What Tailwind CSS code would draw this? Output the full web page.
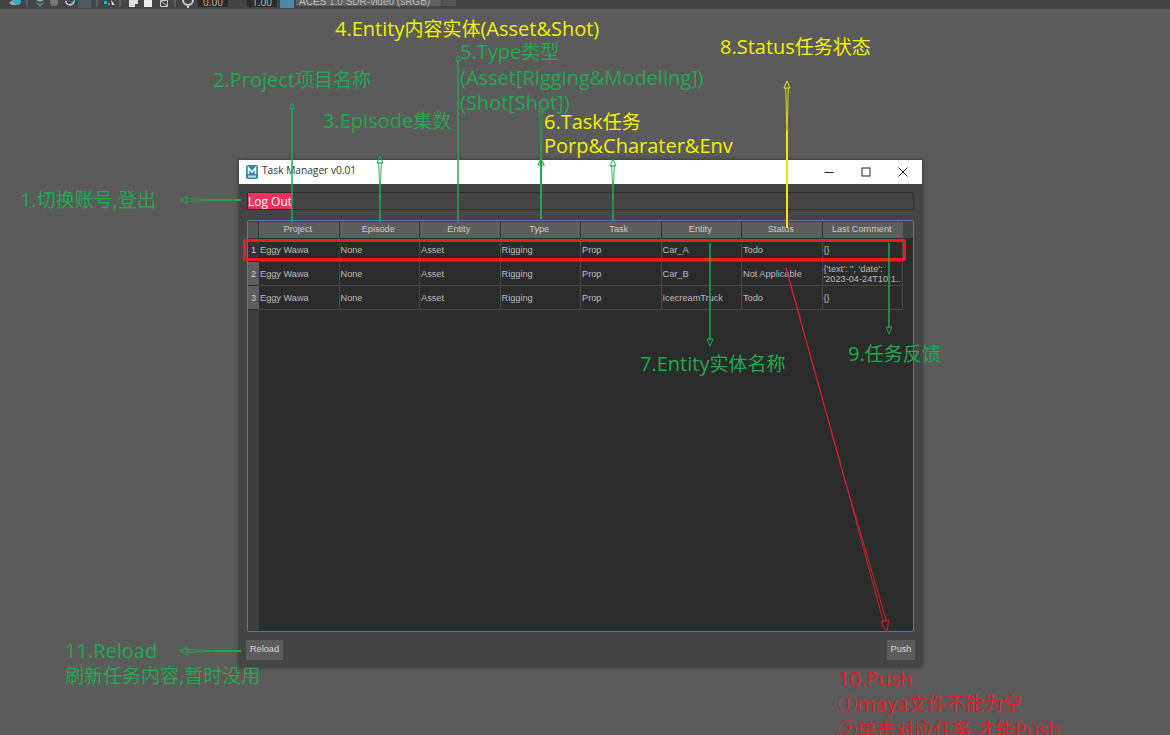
<!DOCTYPE html>
<html lang="en">
  <head>
    <meta charset="UTF-8" />
    <title>Task Manager v0.01</title>
    <script src="https://cdn.jsdelivr.net/npm/@tailwindcss/browser@4"></script>
  </head>
  <body class="bg-[#5b5b5b]">
    <div class="relative w-[1170px] h-[735px] overflow-hidden bg-[#5b5b5b] font-['Open_Sans','Noto_Sans_CJK_SC',sans-serif]">
      <!-- Maya toolbar, cut off by the screenshot -->
      <div class="h-[9px] bg-[#444444] overflow-hidden flex items-start text-[10px] text-[#bdbdbd]">
        <svg width="198" height="9" viewBox="0 0 198 9" class="shrink-0">
          <path d="M78 0h13v8h-13z" fill="#4a5a60" />
          <g fill="none" stroke="#777" stroke-width="1">
            <path d="M27 0v7M97 0v7M120 0v7M175 0v7" />
          </g>
          <path d="M9 3l4-3h4l-1 5h-4z" fill="#aaa" />
          <circle cx="17" cy="1" r="4" fill="#2fb1c4" />
          <path d="M35 2l5 2 5-2-5 5z" fill="#2f96a8" />
          <path d="M36 0h8l-4 2z" fill="#aaa" />
          <circle cx="54" cy="2" r="4" fill="#777" />
          <path d="M66 1a4 4 0 0 0 8 0" fill="none" stroke="#ddd" stroke-width="1.5" />
          <path d="M71 4l4-4" stroke="#2fb1c4" stroke-width="1.5" />
          <path d="M104 1h3v3h-3zM108 3h2v2h-2z" fill="#2fb1c4" />
          <path d="M111 0l4 5-3 0z" fill="#ddd" />
          <path d="M129 0h9v4h-3v3h-6z" fill="#ddd" />
          <path d="M144 0h8v7h-8z" fill="#eee" />
          <path d="M160.500 0.500h7v6h-7zM161 1l6 5" fill="none" stroke="#ccc" />
          <path d="M183 0a5 5 0 0 0 10 0M188 5v3" fill="none" stroke="#ccc" stroke-width="2" />
        </svg>
        <div class="w-[30px] h-[7px] bg-[#2b2b2b] text-center leading-[4px] shrink-0">0.00</div>
        <div class="w-[19px] shrink-0"></div>
        <div class="w-[30px] h-[7px] bg-[#2b2b2b] text-center leading-[4px] shrink-0">1.00</div>
        <div class="w-[3px] shrink-0"></div>
        <div class="w-[14px] h-[8px] bg-[#4d88a8] shrink-0"></div>
        <div class="w-[2px] shrink-0"></div>
        <div class="w-[145px] h-[6px] bg-[#606060] pl-[3px] leading-[3px] shrink-0 font-['Liberation_Sans']">ACES 1.0 SDR-video (sRGB)</div>
        <div class="w-[14px] h-[6px] ml-px bg-[#555555] shrink-0"></div>
      </div>

      <!-- Task Manager window -->
      <div class="absolute left-[239px] top-[160px] w-[683px] h-[507px] flex flex-col bg-[#444444] shadow-[0_0_4px_rgba(0,0,0,0.5)] font-['Liberation_Sans','Noto_Sans_CJK_SC',sans-serif]">
        <div class="h-[24px] bg-white flex items-center shrink-0 text-[#333333]">
          <svg width="12" height="14" viewBox="0 0 12 14" class="ml-[7px]">
            <rect width="12" height="14" rx="2" fill="#2f86a8" />
            <path d="M2.500 9V3l3.500 4 3.500-4v6" fill="none" stroke="#fff" stroke-width="1.6" />
            <rect x="2" y="10.500" width="8" height="2" fill="#bfe0ec" />
          </svg>
          <span class="ml-[4px] -mt-[2px] text-[10.2px] font-['Open_Sans']">Task Manager v0.01</span>
          <div class="ml-auto flex items-center">
            <svg width="10" height="10" viewBox="0 0 10 10" class="mr-[27px]"><path d="M0.500 5.500h9" stroke="#222" /></svg>
            <svg width="10" height="10" viewBox="0 0 10 10" class="mr-[27px]"><rect x="1" y="1" width="8" height="8" fill="none" stroke="#222" /></svg>
            <svg width="10" height="10" viewBox="0 0 10 10" class="mr-[14px]"><path d="M0.500 0.500l9 9M9.500 0.500l-9 9" stroke="#222" /></svg>
          </div>
        </div>

        <div class="flex-1 flex flex-col pl-[8px] pr-[8px] pt-[8px] min-h-0">
          <div class="h-[18px] shrink-0 bg-[#454545] border border-[#2f2f2f] rounded-[2px] flex">
            <div class="w-[44px] bg-[#ef2f62] text-white text-[12px] leading-[17px] font-['Open_Sans'] whitespace-nowrap overflow-hidden">Log Out</div>
          </div>

          <div class="mt-[10px] h-[412px] shrink-0 border border-[#4d7f9b] rounded-[2px] bg-[#2b2b2b] flex flex-col overflow-hidden text-[9.2px] text-[#bcbcbc]">
            <!-- header -->
            <div class="h-[17px] shrink-0 bg-[#444444] grid grid-cols-[11px_repeat(8,80.5px)] text-center text-[#cacaca]">
              <div class="bg-[#555555] border-r border-[#333] mt-px"></div>
              <div class="bg-[#5d5d5d] border-r border-[#333] mt-px pr-[2px] leading-[15px]">Project</div>
              <div class="bg-[#5d5d5d] border-r border-[#333] mt-px pr-[2px] leading-[15px]">Episode</div>
              <div class="bg-[#5d5d5d] border-r border-[#333] mt-px pr-[2px] leading-[15px]">Entity</div>
              <div class="bg-[#5d5d5d] border-r border-[#333] mt-px pr-[2px] leading-[15px]">Type</div>
              <div class="bg-[#5d5d5d] border-r border-[#333] mt-px pr-[4px] leading-[15px]">Task</div>
              <div class="bg-[#5d5d5d] border-r border-[#333] mt-px pr-[2px] leading-[15px]">Entity</div>
              <div class="bg-[#5d5d5d] border-r border-[#333] mt-px pr-[2px] leading-[15px]">Status</div>
              <div class="bg-[#5d5d5d] mt-px pr-[2px] leading-[15px]">Last Comment</div>
            </div>

            <div class="flex-1 flex min-h-0">
              <!-- row numbers -->
              <div class="w-[11px] shrink-0 bg-[#3d3d3d] text-center text-[#d0d0d0] flex flex-col">
                <div class="h-[24px] leading-[24px] bg-[#333333] border-b border-[#2b2b2b]">1</div>
                <div class="h-[24px] leading-[24px] bg-[#5d5d5d] border-b border-[#2b2b2b]">2</div>
                <div class="h-[24px] leading-[24px] bg-[#5d5d5d] border-b border-[#2b2b2b]">3</div>
              </div>
              <!-- rows -->
              <div class="flex flex-col">
                <div class="h-[24px] grid grid-cols-[repeat(8,80.5px)] border-b border-[#484848]">
                  <div class="border-r border-[#484848] border-dotted pl-px leading-[24px]">Eggy Wawa</div>
                  <div class="border-r border-[#484848] pl-px leading-[24px]">None</div>
                  <div class="border-r border-[#484848] pl-px leading-[24px]">Asset</div>
                  <div class="border-r border-[#484848] pl-px leading-[24px]">Rigging</div>
                  <div class="border-r border-[#484848] pl-px leading-[24px]">Prop</div>
                  <div class="border-r border-[#484848] pl-px leading-[24px]">Car_A</div>
                  <div class="border-r border-[#484848] pl-px leading-[24px]">Todo</div>
                  <div class="border-r border-[#484848] pl-px leading-[24px]">{}</div>
                </div>
                <div class="h-[24px] grid grid-cols-[repeat(8,80.5px)] border-b border-[#484848]">
                  <div class="border-r border-[#484848] pl-px leading-[24px]">Eggy Wawa</div>
                  <div class="border-r border-[#484848] pl-px leading-[24px]">None</div>
                  <div class="border-r border-[#484848] pl-px leading-[24px]">Asset</div>
                  <div class="border-r border-[#484848] pl-px leading-[24px]">Rigging</div>
                  <div class="border-r border-[#484848] pl-px leading-[24px]">Prop</div>
                  <div class="border-r border-[#484848] pl-px leading-[24px]">Car_B</div>
                  <div class="border-r border-[#484848] pl-px leading-[24px]">Not Applicable</div>
                  <div class="border-r border-[#484848] pl-px pt-[2px] leading-[10px] whitespace-nowrap overflow-hidden">{'text': '', 'date':<br />'2023-04-24T10:1...</div>
                </div>
                <div class="h-[24px] grid grid-cols-[repeat(8,80.5px)] border-b border-[#484848]">
                  <div class="border-r border-[#484848] pl-px leading-[24px]">Eggy Wawa</div>
                  <div class="border-r border-[#484848] pl-px leading-[24px]">None</div>
                  <div class="border-r border-[#484848] pl-px leading-[24px]">Asset</div>
                  <div class="border-r border-[#484848] pl-px leading-[24px]">Rigging</div>
                  <div class="border-r border-[#484848] pl-px leading-[24px]">Prop</div>
                  <div class="border-r border-[#484848] pl-px leading-[24px]">IcecreamTruck</div>
                  <div class="border-r border-[#484848] pl-px leading-[24px]">Todo</div>
                  <div class="border-r border-[#484848] pl-px leading-[24px]">{}</div>
                </div>
              </div>
            </div>
          </div>

          <div class="mt-[8px] flex justify-between text-[9.2px] text-[#d8d8d8]">
            <button class="w-[37px] h-[20px] -ml-px bg-[#5d5d5d]">Reload</button>
            <button class="w-[28px] h-[20px] mr-[-1px] bg-[#5d5d5d]">Push</button>
          </div>
        </div>
      </div>

      <!-- selection box and arrows drawn over the screenshot -->
      <svg class="absolute inset-0 pointer-events-none" width="1170" height="735" viewBox="0 0 1170 735" fill="none">
        <rect x="244.500" y="240.500" width="660" height="19" stroke="#ed1c24" stroke-width="3" rx="1" />
        <g stroke="#22a84f" stroke-width="1.500">
          <path d="M241 200H215" stroke-width="2" />
          <path d="M220 200L186 198.500M220 200L186 201.500" stroke-width="0.800" />
          <path d="M187 196.500l-7 3.500 7 3.500z" stroke-width="1" />
          <path d="M292 222V108" />
          <path d="M289.500 109l2.500-6 2.500 6z" stroke-width="1" />
          <path d="M380 222V195" />
          <path d="M380 200L378.700 162M380 200L381.300 162" stroke-width="0.900" />
          <path d="M377 163l3-7 3 7z" stroke-width="1" />
          <path d="M458 222V60" />
          <path d="M455.500 61l2.500-6 2.500 6z" stroke-width="1" />
          <path d="M541 219V158" stroke-width="2" />
          <path d="M541 160L539.700 112M541 160L542.300 112" stroke-width="0.800" />
          <path d="M538.500 112l2.500-5 2.500 5z" stroke-width="1" />
          <path d="M538 165l3-6 3 6z" stroke-width="1.200" />
          <path d="M613 222V195" />
          <path d="M613 200L611.700 165M613 200L614.300 165" stroke-width="0.900" />
          <path d="M610 166l3-7 3 7z" stroke-width="1" />
          <path d="M710 243V340" />
          <path d="M707 339l3 7 3-7z" stroke-width="1" />
          <path d="M889 243V328" />
          <path d="M886 327l3 7 3-7z" stroke-width="1" />
          <path d="M241 651H215" stroke-width="2" />
          <path d="M220 651L186 649.500M220 651L186 652.500" stroke-width="0.800" />
          <path d="M187 647.500l-7 3.500 7 3.500z" stroke-width="1" />
        </g>
        <g stroke="#f2e600">
          <path d="M787 228V130" stroke-width="2" />
          <path d="M787 135L785.700 88M787 135L788.300 88" stroke-width="0.900" />
          <path d="M784 88l3-7 3 7z" stroke-width="1" />
        </g>
        <g stroke="#e01f26" stroke-width="1">
          <path d="M786 268L846 484" stroke-width="1.200" />
          <path d="M845 480L883.500 622.500M845 480L886.500 621.500" stroke-width="0.900" />
          <path d="M881 622l6 10 1.500-12z" />
        </g>
      </svg>

      <!-- annotations -->
      <div class="absolute inset-0 pointer-events-none text-[20px] leading-[25px] whitespace-nowrap text-[#22a84f]">
        <p class="absolute left-[20px] top-[187px]">1.<span class="text-[19px]">切换账号</span>,<span class="text-[19px]">登出</span></p>
        <p class="absolute left-[213px] top-[67px]">2.Project<span class="text-[19px]">项目名称</span></p>
        <p class="absolute left-[323px] top-[108px]">3.Episode<span class="text-[19px]">集数</span></p>
        <p class="absolute left-[335px] top-[16px] text-[#f2f200]">4.Entity<span class="text-[19px]">内容实体</span>(Asset&amp;Shot)</p>
        <p class="absolute left-[460px] top-[39px]">5.Type<span class="text-[19px]">类型</span><br />(Asset[Rigging&amp;Modeling])<br />(Shot[Shot])</p>
        <p class="absolute left-[544px] top-[110px] leading-[24px] text-[#f2f200]">6.Task<span class="text-[19px]">任务</span><br />Porp&amp;Charater&amp;Env</p>
        <p class="absolute left-[640px] top-[351px]">7.Entity<span class="text-[19px]">实体名称</span></p>
        <p class="absolute left-[720px] top-[34px] text-[#f2f200]">8.Status<span class="text-[19px]">任务状态</span></p>
        <p class="absolute left-[848px] top-[341px]">9.<span class="text-[19px]">任务反馈</span></p>
        <p class="absolute left-[838px] top-[666px] text-[#e01f26]">10.Push<br /><span class="text-[19px]">①</span>maya<span class="text-[19px]">文件不能为空</span><br /><span class="text-[19px]">②单击对应任务</span>,<span class="text-[19px]">才能</span>Push</p>
        <p class="absolute left-[65px] top-[638px]">11.Reload<br /><span class="text-[19px]">刷新任务内容</span>,<span class="text-[19px]">暂时没用</span></p>
      </div>
    </div>
  </body>
</html>
